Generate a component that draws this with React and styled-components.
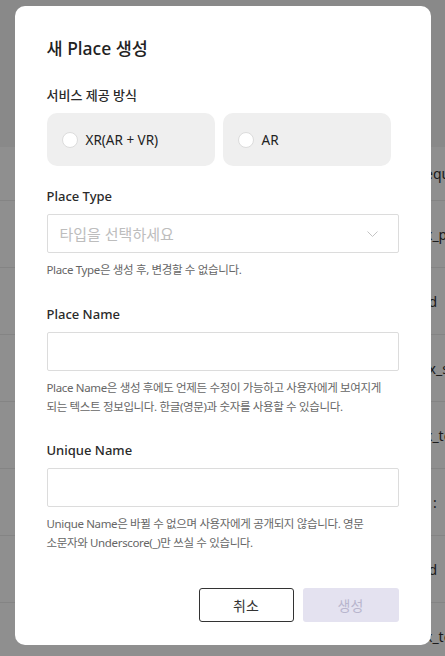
import React from "react";
import styled, { createGlobalStyle } from "styled-components";

const GlobalStyle = createGlobalStyle`
  html, body {
    margin: 0;
    padding: 0;
    width: 445px;
    height: 656px;
    overflow: hidden;
    font-family: "Noto Sans", "Noto Sans CJK KR", sans-serif;
    background: #fff;
  }
  * {
    box-sizing: border-box;
  }
`;

const Page = styled.div`
  width: 445px;
  height: 656px;
  overflow: hidden;
`;

const PageHeader = styled.div`
  height: 147px;
  background: #f5f5f5;
`;

const Row = styled.div`
  height: ${(p) => p.$h}px;
  display: flex;
  align-items: center;
  border-bottom: 1px solid #ececec;
  padding-left: 425px;
  font-size: 14px;
  color: #333;
  white-space: nowrap;
`;

const Overlay = styled.div`
  position: fixed;
  inset: 0;
  background: rgba(0, 0, 0, 0.44);
`;

const Modal = styled.div`
  position: fixed;
  top: 6px;
  left: 50%;
  transform: translateX(-50%);
  width: 416px;
  background: #fff;
  border-radius: 10px;
  padding: 29px 32px 23px;
  display: flex;
  flex-direction: column;
`;

const Title = styled.h2`
  margin: 0 0 24px;
  font-size: 17.5px;
  line-height: 26px;
  font-weight: 500;
  color: #222;
`;

const Label = styled.div`
  font-size: 13px;
  line-height: 20px;
  font-weight: 500;
  color: #2a2a2a;
  margin-bottom: 8px;
`;

const Options = styled.div`
  display: flex;
  gap: 8px;
  margin-bottom: 20px;
`;

const Option = styled.label`
  width: 168px;
  height: 53px;
  border-radius: 10px;
  background: #efefef;
  display: flex;
  align-items: center;
  gap: 8px;
  padding-left: 15px;
  font-size: 13.5px;
  color: #222;
`;

const Radio = styled.span`
  width: 16px;
  height: 16px;
  border-radius: 50%;
  background: #fff;
  border: 1px solid #dcdcdc;
`;

const Field = styled.div`
  display: flex;
  flex-direction: column;
  margin-bottom: ${(p) => p.$mb}px;
`;

const Select = styled.div`
  height: 39px;
  border: 1px solid #dcdcdc;
  border-radius: 2px;
  display: flex;
  align-items: center;
  justify-content: space-between;
  padding: 0 20px 0 12px;
  font-size: 15px;
  color: #bdbdbd;
`;

const Input = styled.input`
  height: 39px;
  border: 1px solid #dcdcdc;
  border-radius: 2px;
  outline: none;
  padding: 0 12px;
  font-family: inherit;
  font-size: 14px;
`;

const Help = styled.p`
  margin: 7px 0 0;
  font-size: 11.5px;
  line-height: 19px;
  color: #666;
  word-break: keep-all;
  letter-spacing: -0.35px;
`;

const Actions = styled.div`
  display: flex;
  justify-content: flex-end;
  gap: 9px;
  margin-top: 12px;
`;

const Button = styled.button`
  width: ${(p) => (p.$primary ? 96 : 95)}px;
  height: 34px;
  border-radius: 3px;
  font-family: inherit;
  font-size: 14px;
  border: ${(p) => (p.$primary ? "none" : "1px solid #333")};
  background: ${(p) => (p.$primary ? "#e4e2f0" : "#fff")};
  color: ${(p) => (p.$primary ? "#b8b5cd" : "#333")};
`;

const rows = [
  { h: 54, t: "equ" },
  { h: 67, t: "x_p" },
  { h: 67, t: "id" },
  { h: 67, t: "ix_s" },
  { h: 67, t: "x_te" },
  { h: 67, t: "1:" },
  { h: 67, t: "id" },
  { h: 67, t: "x_te" },
];

const Chevron = () => (
  <svg width="11" height="6" viewBox="0 0 11 6" fill="none">
    <path d="M0.5 0.5L5.5 5.5L10.5 0.5" stroke="#c4c4c4" strokeWidth="1" />
  </svg>
);

export default function App() {
  return (
    <>
      <GlobalStyle />
      <Page>
        <PageHeader />
        {rows.map((r, i) => (
          <Row key={i} $h={r.h}>
            {r.t}
          </Row>
        ))}
      </Page>
      <Overlay />
      <Modal>
        <Title>새 Place 생성</Title>
        <Label>서비스 제공 방식</Label>
        <Options>
          <Option>
            <Radio />
            XR(AR + VR)
          </Option>
          <Option>
            <Radio />
            AR
          </Option>
        </Options>
        <Field $mb={25}>
          <Label>Place Type</Label>
          <Select>
            타입을 선택하세요
            <Chevron />
          </Select>
          <Help>Place Type은 생성 후, 변경할 수 없습니다.</Help>
        </Field>
        <Field $mb={24}>
          <Label>Place Name</Label>
          <Input />
          <Help>
            Place Name은 생성 후에도 언제든 수정이 가능하고 사용자에게 보여지게
            되는 텍스트 정보입니다. 한글(영문)과 숫자를 사용할 수 있습니다.
          </Help>
        </Field>
        <Field $mb={24}>
          <Label>Unique Name</Label>
          <Input />
          <Help>
            Unique Name은 바뀔 수 없으며 사용자에게 공개되지 않습니다. 영문
            소문자와 Underscore(_)만 쓰실 수 있습니다.
          </Help>
        </Field>
        <Actions>
          <Button>취소</Button>
          <Button $primary>생성</Button>
        </Actions>
      </Modal>
    </>
  );
}
